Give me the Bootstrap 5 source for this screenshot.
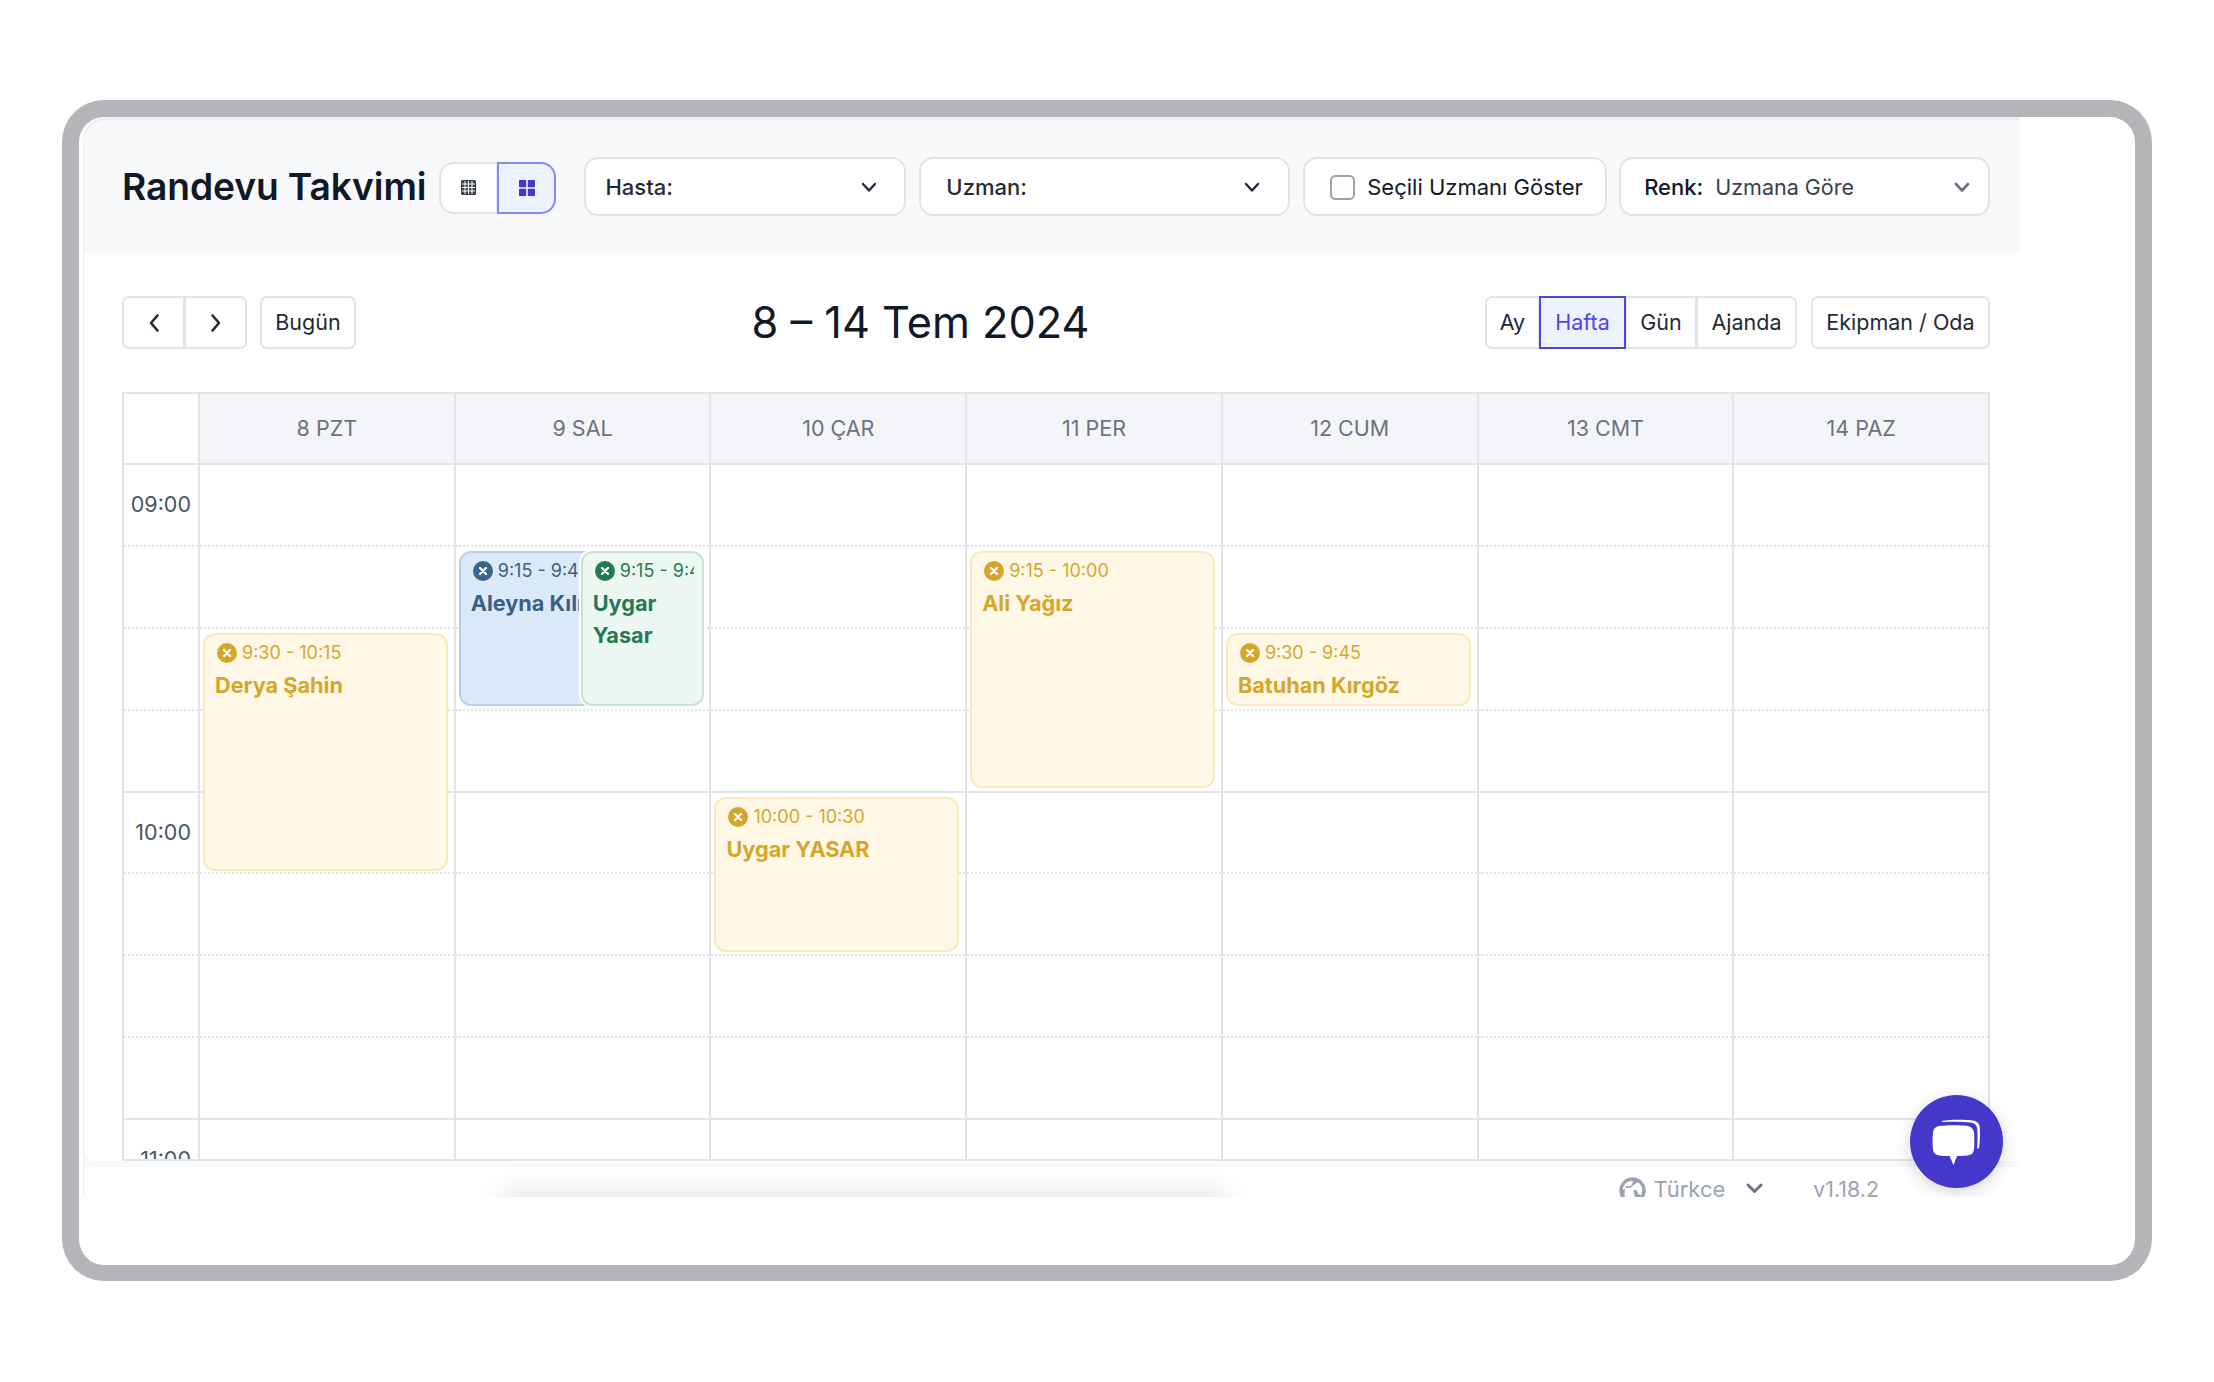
<!DOCTYPE html>
<html lang="tr">
<head>
<meta charset="utf-8">
<title>Randevu Takvimi</title>
<link rel="stylesheet" href="https://cdn.jsdelivr.net/npm/bootstrap@5.3.0/dist/css/bootstrap.min.css">
<style>
html,body{background:#fff;margin:0}
body{font-family:Inter,"Noto Sans",sans-serif;overflow:hidden}
.frame{margin:100px 0 0 62px;width:2090px;height:1181px;box-sizing:border-box;border:solid #b5b5b9;border-width:17px 17px 16px 17px;border-radius:42px;background:#fff}
.shot{position:relative;margin-left:4px;width:1937px;height:1080px;border-top:3px solid #eceef1;border-left:1px solid #eceef1;border-top-left-radius:24px;overflow:hidden;background:#fff}
.top-bar{height:133px;padding:0 30px 0 38px;background:#f8f9fb}
.page-title{font-size:37.2px;font-weight:600;color:#111827;margin:2px 0 0;letter-spacing:-.1px;white-space:nowrap}
.soft-btn{background:#fff;border:2px solid #e2e4e8;color:#1f2937;font-size:21.5px;line-height:1;border-radius:7px;padding:0;height:53px;display:flex;align-items:center;justify-content:center}
.soft-btn:hover{background:#fff;border-color:#e2e4e8;color:#1f2937}
.soft-btn.is-on,.soft-btn.is-on:hover{background:#eef2ff;border-color:#4f46e5;color:#4f46e5;z-index:2}
.view-toggle{margin:2px 28px 0 13px}
.view-toggle .soft-btn{height:52px;width:59px;border-radius:15px}
.view-toggle .soft-btn.is-on{border-color:#818cf8}
.view-toggle .soft-btn:first-child{border-top-right-radius:0;border-bottom-right-radius:0}
.view-toggle .soft-btn:last-child{border-top-left-radius:0;border-bottom-left-radius:0}
.filter-btn{height:59px;background:#fff;border:2px solid #e2e4e8;border-radius:14px;font-size:22px;font-weight:500;color:#1f2937;display:flex;align-items:center;justify-content:space-between;padding:0;white-space:nowrap}
.filter-hasta{width:322px;padding:1px 27px 0 19px;margin-right:13px}
.filter-uzman{width:371px;padding:1px 28px 0 25px;margin-right:13px}
.filter-check{width:304px;padding:1px 0 0 25px;margin-right:12px;justify-content:flex-start;gap:12px;font-weight:400;color:#111827}
.filter-renk{width:371px;padding:1px 18px 0 23px}
.filter-renk b{font-weight:500;color:#111827}
.filter-renk span span{font-weight:400;font-size:21.5px;color:#374151;margin-left:12px}
.check-box{width:25px;height:25px;margin:0;border:2px solid #9ca3af;border-radius:5px;flex:none}
.main-wrap{background:#f8f9fb;padding-bottom:6px}
.main-panel{background:#fff;padding:43px 30px 0 38px;border-bottom-left-radius:14px}
.tool-row{height:96px}
.range-title{font-size:43.3px;font-weight:400;color:#111827;line-height:52px;margin:0;white-space:nowrap}
.tool-left{gap:13px}
.tool-right{gap:14px}
.nav-group .soft-btn{width:63px}
.btn-ay{width:55px}.btn-hafta{width:87px}.btn-gun{width:72px}.btn-ajanda{width:101px}
.btn-today{width:96px}.btn-ekip{width:179px}
.cal-head{height:73px;border:2px solid #e3e4e8}
.cal-corner{width:74px;flex:none;background:#fff}
.cal-hcell{flex:1 1 0;background:#f4f5f9;border-left:2px solid #e3e4e8;color:#6b7280;font-size:21.5px}
.cal-body{height:696px;overflow:hidden;border:solid #e3e4e8;border-width:0 2px 2px 2px}
.cal-axis{width:74px;flex:none}
.cal-day{flex:1 1 0;position:relative;border-left:2px solid #e3e4e8}
.cal-slot{height:81.9px;border-bottom:2px dotted #e2e3e6;box-sizing:border-box}
.cal-slot.hour-end{border-bottom:2px solid #e3e4e8}
.cal-time{font-size:21.5px;color:#4b5563;text-align:right;padding:26px 7px 0 0;line-height:26px}
.evt{position:absolute;border:2px solid;border-radius:12px;overflow:hidden;box-sizing:border-box;padding:6px 0 0 10px}
.evt-time{display:flex;align-items:center;gap:5px;font-size:18px;line-height:24px;white-space:nowrap;overflow:hidden;margin-right:8px;padding-left:2px}
.evt-time svg{flex:none;width:20px;height:20px}
.evt-name{font-size:21.7px;font-weight:700;line-height:32px;margin-top:4px;padding-right:6px}
.evt-y{background:#fff8e6;border-color:#f9e9bf;color:#d4a72c}
.evt-b{background:#dbeafb;border-color:#b8d0ea;color:#3b5f85;white-space:nowrap}
.evt-g{background:#eef8f2;border-color:#c6e3d3;color:#257a55;box-shadow:0 0 0 2px #fff}
.foot-bar{position:relative;height:30px;overflow:hidden;padding-right:141px;color:#9ca3af;font-size:22px;background:#fff}
.foot-smudge{position:absolute;left:425px;top:38px;width:710px;height:10px;box-shadow:0 -4px 30px 8px rgba(0,0,0,.12)}
.foot-item{position:relative;line-height:44px;white-space:nowrap}
.foot-version{font-size:21.4px}
.foot-lang{margin-right:21px}
.foot-chev{margin:16px 50px 0 0}
.foot-globe{position:absolute;left:1535px;top:10px}
.chat-fab{position:absolute;right:17px;bottom:9px;width:93px;height:93px;border-radius:50%;background:#4338ca;border:0;padding:0;box-shadow:0 4px 16px rgba(0,0,0,.16)}
</style>
</head>
<body>
<div class="frame">
<div class="shot">
  <div class="top-bar d-flex align-items-center">
    <h1 class="page-title">Randevu Takvimi</h1>
    <div class="btn-group view-toggle" role="group">
      <button type="button" class="btn soft-btn" aria-label="Tablo"><svg width="15" height="15" viewBox="0 0 15 15"><rect width="15" height="15" rx="1.5" fill="#374151"/><path d="M4 1v13M7.5 1v13M11 1v13M1 4h13M1 7.5h13M1 11h13" stroke="#fff" stroke-width="1"/></svg></button>
      <button type="button" class="btn soft-btn is-on" aria-label="Kart"><svg width="16" height="16" viewBox="0 0 16 16" fill="#4338ca"><rect width="7.2" height="7.2" rx=".8"/><rect x="8.8" width="7.2" height="7.2" rx=".8"/><rect y="8.8" width="7.2" height="7.2" rx=".8"/><rect x="8.8" y="8.8" width="7.2" height="7.2" rx=".8"/></svg></button>
    </div>
    <button type="button" class="btn filter-btn filter-hasta"><span>Hasta:</span><svg width="16" height="11" viewBox="0 0 16 11"><path d="M2 2l6 6.5L14 2" fill="none" stroke="#1f2937" stroke-width="2.4" stroke-linecap="round" stroke-linejoin="round"/></svg></button>
    <button type="button" class="btn filter-btn filter-uzman"><span>Uzman:</span><svg width="16" height="11" viewBox="0 0 16 11"><path d="M2 2l6 6.5L14 2" fill="none" stroke="#1f2937" stroke-width="2.4" stroke-linecap="round" stroke-linejoin="round"/></svg></button>
    <label class="btn filter-btn filter-check"><input class="form-check-input check-box" type="checkbox">Seçili Uzmanı Göster</label>
    <button type="button" class="btn filter-btn filter-renk"><span><b>Renk:</b><span>Uzmana Göre</span></span><svg width="16" height="11" viewBox="0 0 16 11"><path d="M2 2l6 6.5L14 2" fill="none" stroke="#6b7280" stroke-width="2.6" stroke-linecap="round" stroke-linejoin="round"/></svg></button>
  </div>

  <div class="main-wrap">
  <div class="main-panel">
    <div class="tool-row d-flex justify-content-between align-items-start">
      <div class="d-flex tool-left">
        <div class="btn-group nav-group" role="group">
          <button type="button" class="btn soft-btn" aria-label="Önceki"><svg width="12" height="20" viewBox="0 0 12 20"><path d="M9.500 2.500L3 10l6.500 7.500" fill="none" stroke="#1f2937" stroke-width="2.600" stroke-linecap="round" stroke-linejoin="round"/></svg></button>
          <button type="button" class="btn soft-btn" aria-label="Sonraki"><svg width="12" height="20" viewBox="0 0 12 20"><path d="M2.500 2.500L9 10l-6.500 7.500" fill="none" stroke="#1f2937" stroke-width="2.600" stroke-linecap="round" stroke-linejoin="round"/></svg></button>
        </div>
        <button type="button" class="btn soft-btn btn-today">Bugün</button>
      </div>
      <h2 class="range-title">8 – 14 Tem 2024</h2>
      <div class="d-flex tool-right">
        <div class="btn-group view-group" role="group">
          <button type="button" class="btn soft-btn btn-ay">Ay</button>
          <button type="button" class="btn soft-btn btn-hafta is-on">Hafta</button>
          <button type="button" class="btn soft-btn btn-gun">Gün</button>
          <button type="button" class="btn soft-btn btn-ajanda">Ajanda</button>
        </div>
        <button type="button" class="btn soft-btn btn-ekip">Ekipman / Oda</button>
      </div>
    </div>

    <div class="cal-head d-flex">
      <div class="cal-corner"></div>
      <div class="cal-hcell d-flex align-items-center justify-content-center">8 PZT</div>
      <div class="cal-hcell d-flex align-items-center justify-content-center">9 SAL</div>
      <div class="cal-hcell d-flex align-items-center justify-content-center">10 ÇAR</div>
      <div class="cal-hcell d-flex align-items-center justify-content-center">11 PER</div>
      <div class="cal-hcell d-flex align-items-center justify-content-center">12 CUM</div>
      <div class="cal-hcell d-flex align-items-center justify-content-center">13 CMT</div>
      <div class="cal-hcell d-flex align-items-center justify-content-center">14 PAZ</div>
    </div>
    <div class="cal-body d-flex" id="calBody"></div>
  </div>
  </div>

  <div class="foot-bar d-flex justify-content-end">
    <div class="foot-smudge"></div>
    <svg class="foot-globe" width="27" height="27" viewBox="0 0 27 27"><circle cx="13.500" cy="13.500" r="11.500" fill="#fff" stroke="#9ca3af" stroke-width="3.500"/><path d="M6 9c3 0 4 1 5.500 0 1-1 3-3 2-6l5 1.500c-1 3-4 3-5.500 5-1 1.500-4 2-6 1zM15 13c2-1 3 1 4 3 1 2 3 2 4 3l-3 5c-2 .5-4-1-4-4 0-2-2-5-1-7zM3 13l3-1-1 10-2-4z" fill="#9ca3af"/></svg>
    <span class="foot-item foot-lang">Türkçe</span>
    <svg class="foot-item foot-chev" width="17" height="11" viewBox="0 0 17 11"><path d="M2 2l6.500 6.500L15 2" fill="none" stroke="#6b7280" stroke-width="3" stroke-linecap="round" stroke-linejoin="round"/></svg>
    <span class="foot-item foot-version">v1.18.2</span>
  </div>

  <button type="button" class="chat-fab" aria-label="Sohbet">
    <svg width="93" height="93" viewBox="0 0 93 93"><path d="M31.500 26c8-1.300 22-1.500 31-.5 4.500.5 7 3 7.300 7 .4 6.500.2 14-.8 20.500-.1.600-1.500 1-1.800.2.400-6.500.500-13.500 0-19.500-.4-3.500-2-5.500-5.500-6-6-.8-16-1.200-28.500-.8-.8-.2-2.500-.4-1.700-.9z" fill="#fff"/><path d="M29 31c9-1 20-1 27.500-.2 4 .5 7 2.600 7.500 6.700.5 6 .4 12 0 17-.4 3.500-2.500 5.500-6.500 6-2.500.3-6 .4-10.300.5l-3.800 9-3.800-9c-4-.1-7.600-.3-10.100-.6-3.500-.4-6.200-2.500-6.500-6-.6-5.500-.6-11.500 0-17 .4-3.800 2.500-6 6-6.400z" fill="#fff"/></svg>
  </button>
</div>
</div>
<script>
const icon=c=>`<svg viewBox="0 0 20 20"><circle cx="10" cy="10" r="10" fill="${c}"/><path d="M7 7l6 6M13 7l-6 6" stroke="#fff" stroke-width="2.300" stroke-linecap="round"/></svg>`;
const evt=(k,c,l,t,w,h,time,name)=>`<div class="evt evt-${k}" style="left:${l}px;top:${t}px;width:${w}px;height:${h}px"><div class="evt-time">${icon(c)}<span>${time}</span></div><div class="evt-name">${name}</div></div>`;
const Y='#d4a72c',B='#3d6489',G='#257a55';
const events=[
 evt('y',Y,3,168,245,238,'9:30 - 10:15','Derya Şahin'),
 evt('b',B,3,86,180,155,'9:15 - 9:45','Aleyna Kılıç')+evt('g',G,125,86,123,155,'9:15 - 9:45','Uygar Yasar'),
 evt('y',Y,3,332,245,155,'10:00 - 10:30','Uygar YASAR'),
 evt('y',Y,3,86,245,237,'9:15 - 10:00','Ali Yağız'),
 evt('y',Y,3,168,245,73,'9:30 - 9:45','Batuhan Kırgöz'),'',''];
const slots=(n,fn)=>Array.from({length:n},(_,i)=>fn(i)).join('');
const cls=i=>'cal-slot'+(i%4===3?' hour-end':'');
const labels={0:'09:00',4:'10:00',8:'11:00'};
let html='<div class="cal-axis">'+slots(9,i=>`<div class="${cls(i)}${labels[i]?' cal-time':''}">${labels[i]||''}</div>`)+'</div>';
events.forEach(e=>{html+='<div class="cal-day">'+slots(9,i=>`<div class="${cls(i)}"></div>`)+e+'</div>'});
document.getElementById('calBody').innerHTML=html;
</script>
<script src="https://cdn.jsdelivr.net/npm/bootstrap@5.3.0/dist/js/bootstrap.bundle.min.js"></script>
</body>
</html>
